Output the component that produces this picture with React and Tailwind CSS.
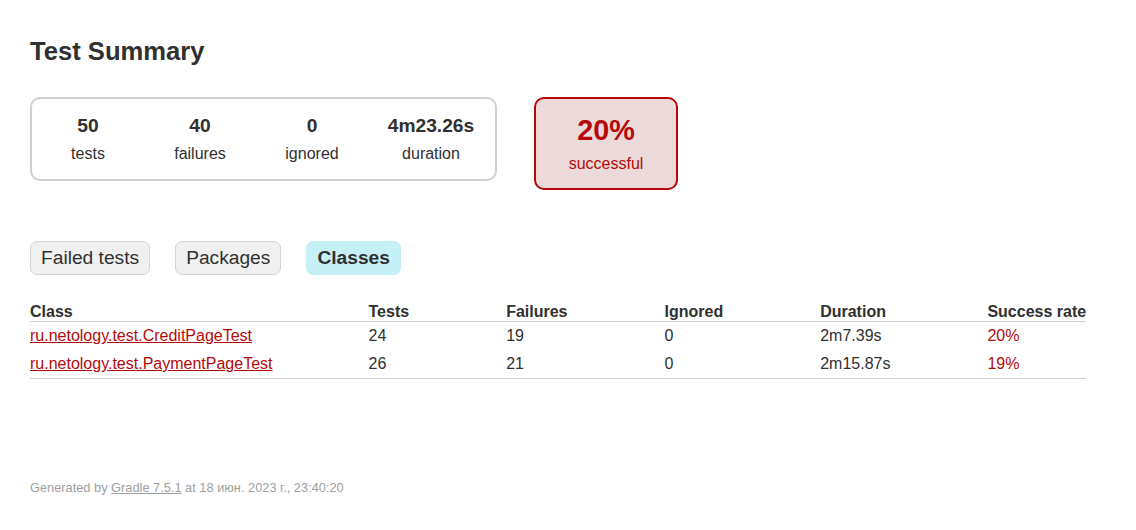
import React from "react";

const counters = [
  { value: "50", label: "tests", w: "w-[112px]" },
  { value: "40", label: "failures", w: "w-[112px]" },
  { value: "0", label: "ignored", w: "w-[112px]" },
  { value: "4m23.26s", label: "duration", w: "w-[126px]" },
];

const rows = [
  { name: "ru.netology.test.CreditPageTest", tests: 24, failures: 19, ignored: 0, duration: "2m7.39s", rate: "20%" },
  { name: "ru.netology.test.PaymentPageTest", tests: 26, failures: 21, ignored: 0, duration: "2m15.87s", rate: "19%" },
];

const tabs = ["Failed tests", "Packages", "Classes"];

export default function App() {
  return (
    <div className="min-h-screen bg-white text-[#303030] text-[16px] leading-[normal] font-['Liberation_Sans',Arial,sans-serif]">
      <div className="pl-[30px] pt-[37px]">
        <h1 className="text-[25.6px] font-bold">Test Summary</h1>

        {/* summary boxes */}
        <div className="mt-[31px] flex items-start">
          <div className="flex border-2 border-[#d0d0d0] rounded-[10px] py-px pr-px">
            {counters.map((c) => (
              <div key={c.label} className={`${c.w} py-[15px] text-center`}>
                <p className="text-[19.2px] font-bold mb-2">{c.value}</p>
                <p>{c.label}</p>
              </div>
            ))}
          </div>
          <div className="ml-[37px] w-[144px] border-2 border-[#b60808] bg-[#ecdada] rounded-[10px] py-[15px] text-center text-[#b60808]">
            <p className="text-[28.8px] font-bold mb-2">20%</p>
            <p>successful</p>
          </div>
        </div>

        {/* tabs */}
        <ul className="mt-[51px] flex">
          {tabs.map((t) => (
            <li
              key={t}
              className={
                t === "Classes"
                  ? "mr-[25px] px-2.5 py-[5px] rounded-[7px] border border-[#c5f0f5] bg-[#c5f0f5] text-[19.2px] font-bold"
                  : "mr-[25px] px-2.5 py-[5px] rounded-[7px] border border-[#d4d4d4] bg-[#f0f0f0] text-[19.2px]"
              }
            >
              {t}
            </li>
          ))}
        </ul>

        {/* classes table */}
        <table className="mt-[28px] border-collapse border-b border-[#d0d0d0]">
          <thead>
            <tr>
              <th className="text-left whitespace-nowrap pl-0 border-b border-[#d0d0d0]">Class</th>
              <th className="text-left whitespace-nowrap pl-24 border-b border-[#d0d0d0]">Tests</th>
              <th className="text-left whitespace-nowrap pl-[97px] border-b border-[#d0d0d0]">Failures</th>
              <th className="text-left whitespace-nowrap pl-[97px] border-b border-[#d0d0d0]">Ignored</th>
              <th className="text-left whitespace-nowrap pl-[97px] border-b border-[#d0d0d0]">Duration</th>
              <th className="text-left whitespace-nowrap pl-[97px] border-b border-[#d0d0d0]">Success rate</th>
            </tr>
          </thead>
          <tbody>
            {rows.map((r) => (
              <tr key={r.name}>
                <td className="whitespace-nowrap pl-0 py-[5px] text-[#b60808]">
                  <a href="#" className="underline">{r.name}</a>
                </td>
                <td className="whitespace-nowrap pl-24 py-[5px]">{r.tests}</td>
                <td className="whitespace-nowrap pl-[97px] py-[5px]">{r.failures}</td>
                <td className="whitespace-nowrap pl-[97px] py-[5px]">{r.ignored}</td>
                <td className="whitespace-nowrap pl-[97px] py-[5px]">{r.duration}</td>
                <td className="whitespace-nowrap pl-[97px] py-[5px] text-[#b60808]">{r.rate}</td>
              </tr>
            ))}
          </tbody>
        </table>

        <div className="mt-[101px] text-[12.8px] text-[#a0a0a0] whitespace-nowrap pb-8">
          Generated by{" "}
          <a href="#" className="underline">Gradle 7.5.1</a>
          {" "}at 18 июн. 2023 г., 23:40:20
        </div>
      </div>
    </div>
  );
}
